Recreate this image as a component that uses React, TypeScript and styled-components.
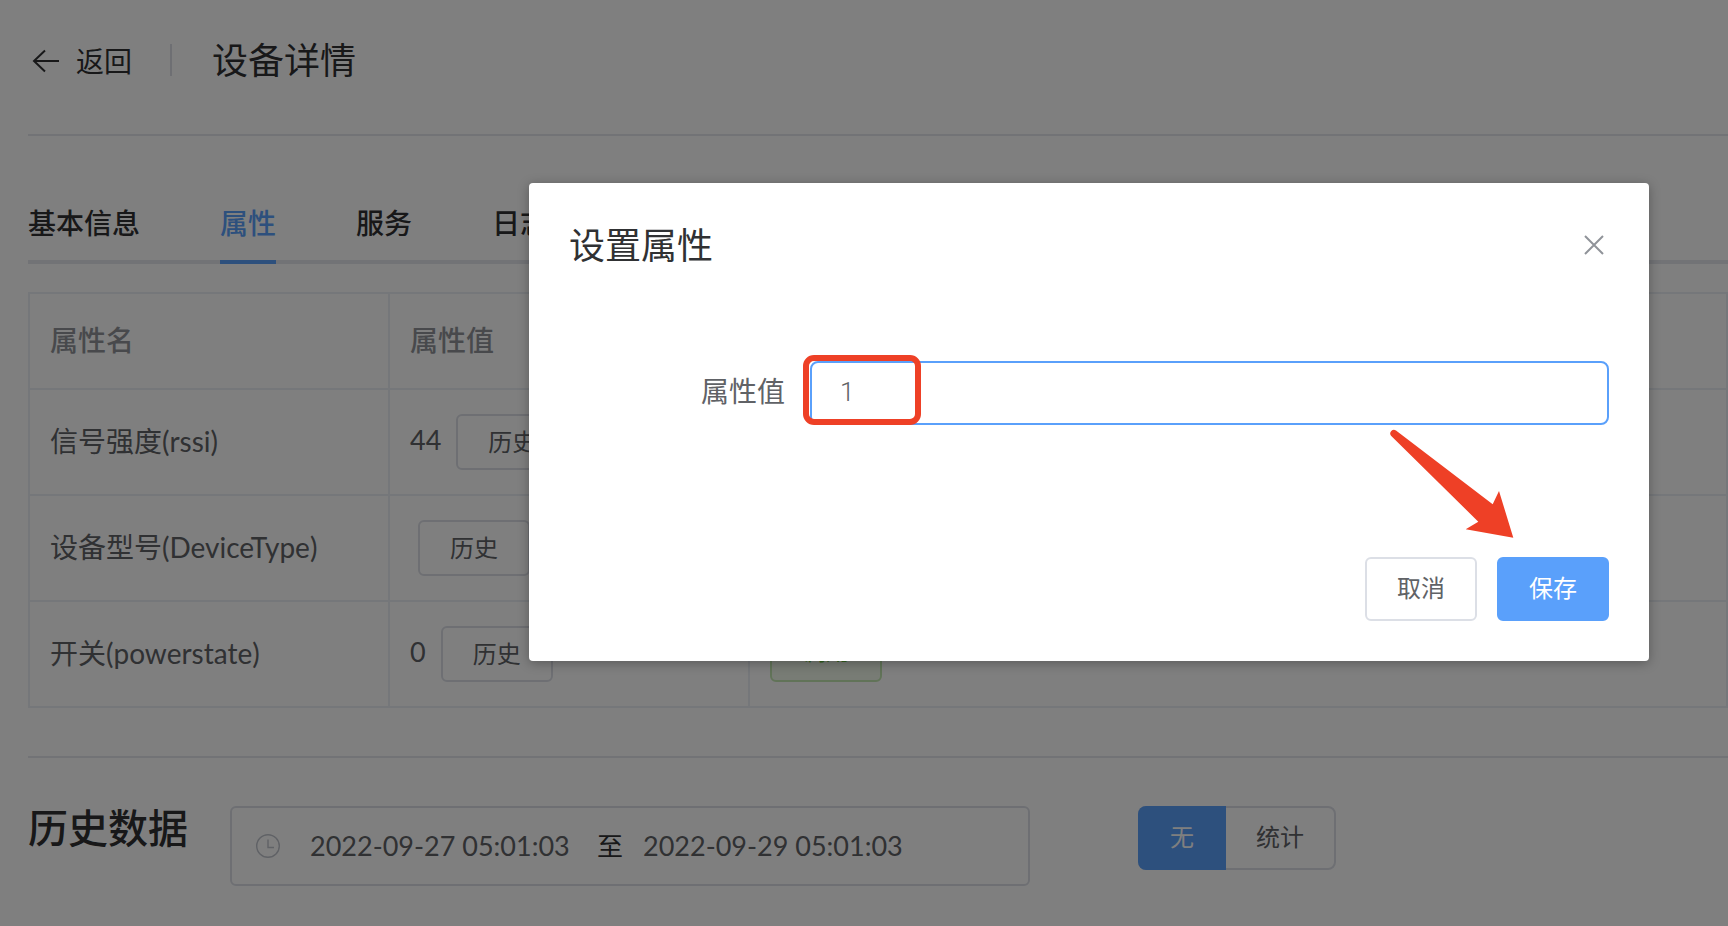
import React from "react";
import styled, { createGlobalStyle } from "styled-components";

const rows = [
  { name: "信号强度(rssi)", value: "44" },
  { name: "设备型号(DeviceType)", value: "" },
  { name: "开关(powerstate)", value: "0" },
];

const App = () => {
  return (
    <Page>
      <GlobalStyle />
      <Header>
        <BackIcon width="28" height="24" viewBox="0 0 28 24">
          <path d="M2 12H27M13 1.5 2 12l11 10.5" />
        </BackIcon>
        <BackText>返回</BackText>
        <HeaderDivider />
        <PageTitle>设备详情</PageTitle>
      </Header>

      <TabBar>
        <Tab>基本信息</Tab>
        <Tab $active>属性</Tab>
        <Tab>服务</Tab>
        <Tab>日志</Tab>
      </TabBar>

      <Table>
        <HeadCell>属性名</HeadCell>
        <HeadCell>属性值</HeadCell>
        <HeadCell>操作</HeadCell>
        {rows.map((row) => (
          <React.Fragment key={row.name}>
            <NameCell>{row.name}</NameCell>
            <Cell>
              {row.value && <Value>{row.value}</Value>}
              <HistoryButton>历史</HistoryButton>
            </Cell>
            <Cell>
              <GreenButton>调用</GreenButton>
            </Cell>
          </React.Fragment>
        ))}
      </Table>

      <History>
        <HistoryTitle>历史数据</HistoryTitle>
        <DateBox>
          <ClockIcon width="24" height="24" viewBox="0 0 24 24">
            <circle cx="12" cy="12" r="11.3" />
            <path d="M12 5.5V13.5H18" />
          </ClockIcon>
          <DateText>2022-09-27 05:01:03</DateText>
          <DateSep>至</DateSep>
          <DateText>2022-09-29 05:01:03</DateText>
        </DateBox>
        <Toggle>
          <ToggleItem $active>无</ToggleItem>
          <ToggleItem>统计</ToggleItem>
        </Toggle>
      </History>

      <Overlay />

      <Modal>
        <ModalHeader>
          <ModalTitle>设置属性</ModalTitle>
          <CloseIcon width="20" height="20" viewBox="0 0 20 20">
            <path d="M1 1 19 19M19 1 1 19" />
          </CloseIcon>
        </ModalHeader>
        <FormRow>
          <FormLabel>属性值</FormLabel>
          <FormInput value="1" readOnly />
        </FormRow>
        <ModalFooter>
          <CancelButton>取消</CancelButton>
          <SaveButton>保存</SaveButton>
        </ModalFooter>
      </Modal>

      <RedBox />
      <RedArrow width="130" height="116" viewBox="0 0 130 116">
        <path d="M11 3.5 107.7 77.3 114 64 128.3 110.7 80.7 102.3 93.3 94.7 6 8.8A3.7 3.7 0 0 1 11 3.5Z" />
      </RedArrow>
    </Page>
  );
};

const GlobalStyle = createGlobalStyle`
  html, body {
    margin: 0;
    padding: 0;
    height: 926px;
    overflow: hidden;
    background: #fff;
  }
  * {
    box-sizing: border-box;
  }
`;

const Page = styled.div`
  position: relative;
  width: 1728px;
  height: 926px;
  padding-left: 28px;
  overflow: hidden;
  background: #fff;
  color: #303133;
  font-family: Lato, "Noto Sans CJK SC", sans-serif;
`;

const Header = styled.div`
  display: flex;
  align-items: center;
  height: 136px;
  padding-bottom: 14px;
  border-bottom: 2px solid #e4e7ed;
`;

const BackIcon = styled.svg`
  margin: 2px 0 0 4px;
  fill: none;
  stroke: #303133;
  stroke-width: 2;
`;

const BackText = styled.span`
  margin: 2px 0 0 16px;
  font-size: 28px;
  line-height: 36px;
`;

const HeaderDivider = styled.div`
  width: 2px;
  height: 32px;
  margin: 0 40px 0 38px;
  background: #dcdfe6;
`;

const PageTitle = styled.h1`
  margin: 0;
  font-size: 36px;
  font-weight: 400;
  line-height: 48px;
`;

const TabBar = styled.div`
  display: flex;
  gap: 80px;
  height: 128px;
  align-items: flex-end;
  border-bottom: 4px solid #e4e7ed;
`;

const Tab = styled.div<{ $active?: boolean }>`
  height: 74px;
  margin-bottom: -4px;
  padding-top: 11px;
  font-size: 28px;
  font-weight: 500;
  line-height: 44px;
  color: ${(props) => (props.$active ? "#5aa0fb" : "#303133")};
  border-bottom: 4px solid ${(props) => (props.$active ? "#5aa0fb" : "transparent")};
`;

const Table = styled.div`
  display: grid;
  grid-template-columns: 360px 360px 1fr;
  grid-auto-rows: 106px;
  grid-template-rows: 96px;
  margin-top: 28px;
  border-top: 2px solid #ebeef5;
  border-left: 2px solid #ebeef5;
`;

const Cell = styled.div`
  display: flex;
  align-items: center;
  padding-left: 20px;
  font-size: 28px;
  color: #606266;
  border-right: 2px solid #ebeef5;
  border-bottom: 2px solid #ebeef5;
`;

const NameCell = styled(Cell)`
  padding-bottom: 4px;
`;

const HeadCell = styled(Cell)`
  padding-bottom: 4px;
  font-weight: 500;
  color: #909399;
`;

const Value = styled.span`
  margin: 0 7px 5px 0;
  font-size: 27px;
`;

const HistoryButton = styled.button`
  width: 112px;
  height: 56px;
  margin-left: 8px;
  padding: 0 0 4px;
  font-family: inherit;
  font-size: 24px;
  color: #606266;
  background: #fff;
  border: 2px solid #dcdfe6;
  border-radius: 6px;
`;

const GreenButton = styled(HistoryButton)`
  margin-left: 0;
  padding-bottom: 10px;
  color: #67c23a;
  background: #f0f9eb;
  border-color: #c2e7b0;
`;

const History = styled.div`
  display: flex;
  align-items: flex-start;
  margin-top: 48px;
  padding-top: 48px;
  border-top: 2px solid #e4e7ed;
`;

const HistoryTitle = styled.h2`
  width: 202px;
  margin: 0;
  font-size: 40px;
  font-weight: 500;
  line-height: 44px;
`;

const DateBox = styled.div`
  display: flex;
  align-items: center;
  width: 800px;
  height: 80px;
  padding-left: 24px;
  border: 2px solid #dcdfe6;
  border-radius: 6px;
`;

const ClockIcon = styled.svg`
  margin-right: 30px;
  fill: none;
  stroke: #c0c4cc;
  stroke-width: 1.4;
`;

const DateText = styled.span`
  width: 258px;
  padding-bottom: 2px;
  font-size: 27px;
  white-space: nowrap;
  color: #606266;
`;

const DateSep = styled.span`
  margin: 0 20px 0 29px;
  padding-bottom: 4px;
  font-size: 26px;
  color: #303133;
`;

const Toggle = styled.div`
  display: flex;
  width: 198px;
  height: 64px;
  margin-left: 108px;
  border: 2px solid #dcdfe6;
  border-radius: 8px;
`;

const ToggleItem = styled.div<{ $active?: boolean }>`
  display: flex;
  align-items: center;
  justify-content: center;
  flex: ${(props) => (props.$active ? "0 0 88px" : "1")};
  margin: ${(props) => (props.$active ? "-2px 0 -2px -2px" : "0")};
  padding-bottom: 6px;
  font-size: 24px;
  color: ${(props) => (props.$active ? "#fff" : "#606266")};
  background: ${(props) => (props.$active ? "#5aa0fb" : "transparent")};
  border-radius: ${(props) => (props.$active ? "8px 0 0 8px" : "0")};
`;

const Overlay = styled.div`
  position: absolute;
  inset: 0;
  background: rgba(0, 0, 0, 0.5);
`;

const Modal = styled.div`
  position: absolute;
  left: 529px;
  top: 183px;
  width: 1120px;
  height: 478px;
  padding: 0 40px;
  background: #fff;
  border-radius: 4px;
  box-shadow: 0 2px 12px rgba(0, 0, 0, 0.3);
`;

const ModalHeader = styled.div`
  display: flex;
  align-items: center;
  justify-content: space-between;
  height: 124px;
`;

const ModalTitle = styled.h3`
  margin: 0;
  font-size: 36px;
  font-weight: 400;
  line-height: 48px;
  color: #303133;
`;

const CloseIcon = styled.svg`
  margin-right: 5px;
  fill: none;
  stroke: #909399;
  stroke-width: 2;
`;

const FormRow = styled.div`
  display: flex;
  align-items: center;
  margin-top: 54px;
`;

const FormLabel = styled.label`
  flex: 0 0 241px;
  padding: 0 25px 6px 0;
  font-size: 28px;
  text-align: right;
  color: #606266;
`;

const FormInput = styled.input`
  flex: 1;
  height: 64px;
  padding: 0 28px 2px;
  font-family: Roboto, sans-serif;
  font-size: 26px;
  font-weight: 300;
  color: #606266;
  background: #fff;
  border: 2px solid #5aa0fb;
  border-radius: 8px;
  outline: none;
`;

const ModalFooter = styled.div`
  display: flex;
  justify-content: flex-end;
  gap: 20px;
  margin-top: 132px;
`;

const CancelButton = styled.button`
  width: 112px;
  height: 64px;
  padding: 0 0 6px;
  font-family: inherit;
  font-size: 24px;
  color: #606266;
  background: #fff;
  border: 2px solid #dcdfe6;
  border-radius: 6px;
`;

const SaveButton = styled(CancelButton)`
  color: #fff;
  background: #5aa0fb;
  border-color: #5aa0fb;
`;

const RedBox = styled.div`
  position: absolute;
  left: 803px;
  top: 355px;
  width: 118px;
  height: 70px;
  border: 6px solid #ee4026;
  border-radius: 11px;
`;

const RedArrow = styled.svg`
  position: absolute;
  left: 1385px;
  top: 427px;
  fill: #ee4026;
`;

export default App;
